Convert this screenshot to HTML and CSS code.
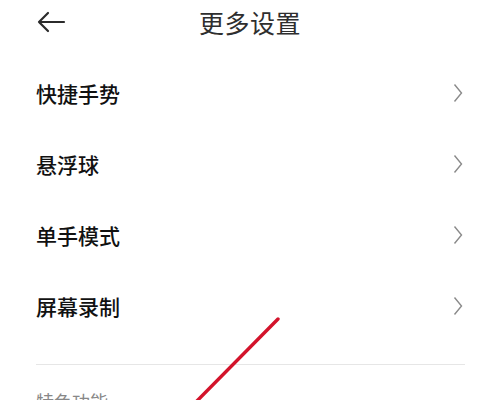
FILE: index.html
```html
<!DOCTYPE html>
<html lang="zh-CN">
<head>
<meta charset="utf-8">
<link rel="stylesheet" href="styles.css">
</head>
<body>
<div class="page">
  <header class="header">
    <svg class="back" width="30" height="22" viewBox="0 0 30 22">
      <path d="M28 11 H3 M12 2 L3 11 L12 20" fill="none" stroke="#2b2b2b" stroke-width="2.2" stroke-linecap="round" stroke-linejoin="round"/>
    </svg>
    <div class="title">更多设置</div>
  </header>
  <ul class="list">
    <li class="row"><span>快捷手势</span><svg class="chev" width="10" height="20" viewBox="0 0 10 20"><path d="M1.5 1.5 L8.5 10 L1.5 18.5" fill="none" stroke="#8a8a8a" stroke-width="1.4"/></svg></li>
    <li class="row"><span>悬浮球</span><svg class="chev" width="10" height="20" viewBox="0 0 10 20"><path d="M1.5 1.5 L8.5 10 L1.5 18.5" fill="none" stroke="#8a8a8a" stroke-width="1.4"/></svg></li>
    <li class="row"><span>单手模式</span><svg class="chev" width="10" height="20" viewBox="0 0 10 20"><path d="M1.5 1.5 L8.5 10 L1.5 18.5" fill="none" stroke="#8a8a8a" stroke-width="1.4"/></svg></li>
    <li class="row"><span>屏幕录制</span><svg class="chev" width="10" height="20" viewBox="0 0 10 20"><path d="M1.5 1.5 L8.5 10 L1.5 18.5" fill="none" stroke="#8a8a8a" stroke-width="1.4"/></svg></li>
  </ul>
  <div class="divider"></div>
  <div class="section">特色功能</div>
  <svg class="annot" width="500" height="400" viewBox="0 0 500 400">
    <line x1="278" y1="319" x2="190" y2="408" stroke="#d3132b" stroke-width="3.4" stroke-linecap="round"/>
  </svg>
</div>
</body>
</html>
```
FILE: styles.css
```css
* { box-sizing: border-box; }
html, body { margin: 0; padding: 0; background: #fff; }
body {
  font-family: "Noto Sans CJK SC", "Noto Sans", sans-serif;
  width: 500px;
  height: 400px;
  overflow: hidden;
}
.page {
  position: relative;
  width: 500px;
  height: 400px;
  overflow: hidden;
}
.header {
  height: 44px;
  display: flex;
  align-items: center;
  justify-content: center;
  position: relative;
}
.back {
  position: absolute;
  left: 36px;
  top: 11px;
}
.title {
  font-size: 25px;
  color: #2e2e2e;
  line-height: 44px;
  letter-spacing: 0.5px;
}
.list {
  list-style: none;
  margin: 0;
  padding: 13px 0 0 0;
}
.row {
  height: 71px;
  display: flex;
  align-items: center;
  justify-content: space-between;
  padding: 0 36px 0 36px;
  font-size: 21px;
  font-weight: 500;
  color: #111;
}
.chev { margin-right: 1px; }
.divider {
  margin: 23px 35px 0 36px;
  height: 1px;
  background: #e6e6e6;
}
.section {
  padding: 24px 36px 0;
  font-size: 18px;
  color: #888;
  line-height: 24px;
}
.annot {
  position: absolute;
  left: 0;
  top: 0;
  pointer-events: none;
}
```
